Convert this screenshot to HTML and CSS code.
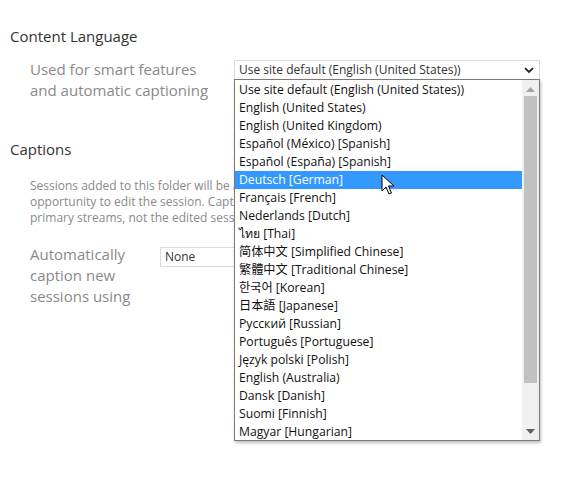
FILE: index.html
```html
<!DOCTYPE html>
<html>
<head>
<meta charset="utf-8">
<link rel="stylesheet" href="styles.css">
</head>
<body>
<div class="page">
  <section class="group">
    <h2 class="heading">Content Language</h2>
    <div class="field lang-field">
      <div class="label">Used for smart features<br>and automatic captioning</div>
      <div class="select-wrap">
        <div class="select lang-select">
          <span>Use site default (English (United States))</span>
          <svg class="chev" width="10" height="7" viewBox="0 0 10 7"><path d="M1 1.2 L5 5 L9 1.2" fill="none" stroke="#222" stroke-width="1.8"/></svg>
        </div>
        <div class="dropdown">
          <ul class="options">
            <li>Use site default (English (United States))</li>
            <li>English (United States)</li>
            <li>English (United Kingdom)</li>
            <li>Español (México) [Spanish]</li>
            <li>Español (España) [Spanish]</li>
            <li class="active">Deutsch [German]</li>
            <li>Français [French]</li>
            <li>Nederlands [Dutch]</li>
            <li>ไทย [Thai]</li>
            <li>简体中文 [Simplified Chinese]</li>
            <li>繁體中文 [Traditional Chinese]</li>
            <li>한국어 [Korean]</li>
            <li>日本語 [Japanese]</li>
            <li>Русский [Russian]</li>
            <li>Português [Portuguese]</li>
            <li>Język polski [Polish]</li>
            <li>English (Australia)</li>
            <li>Dansk [Danish]</li>
            <li>Suomi [Finnish]</li>
            <li>Magyar [Hungarian]</li>
          </ul>
          <div class="scrollbar">
            <svg class="arrow" width="9" height="5" viewBox="0 0 9 5"><path d="M0 5 L4.5 0 L9 5 Z" fill="#a3a3a3"/></svg>
            <div class="track"><div class="thumb"></div></div>
            <svg class="arrow" width="9" height="5" viewBox="0 0 9 5"><path d="M0 0 L4.5 5 L9 0 Z" fill="#606060"/></svg>
          </div>
          <svg class="cursor" width="14" height="22" viewBox="0 0 14 22"><path d="M1 1 L1 17 L5 13 L8 20 L10.5 19 L7.5 12 L13 12 Z" fill="#fff" stroke="#000" stroke-width="1" stroke-linejoin="miter"/></svg>
        </div>
      </div>
    </div>
  </section>
  <section class="group">
    <h2 class="heading">Captions</h2>
    <p class="desc"><span class="line">Sessions added to this folder will be automatically captioned after you have had an</span><span class="line">opportunity to edit the session. Captions are generated from the original</span><span class="line">primary streams, not the edited session.</span></p>
    <div class="field cap-field">
      <div class="label">Automatically<br>caption new<br>sessions using</div>
      <div class="select cap-select"><span>None</span></div>
    </div>
  </section>
</div>
</body>
</html>
```
FILE: styles.css
```css
* { box-sizing: border-box; }
html, body { margin: 0; padding: 0; background: #fff; }
body {
  font-family: "Open Sans", "Noto Sans", "Noto Sans CJK SC", sans-serif;
  color: #333;
  width: 578px;
  height: 480px;
  overflow: hidden;
}
.page { padding: 26px 0 0 10px; }
.heading {
  margin: 0;
  font-size: 15px;
  font-weight: 400;
  line-height: 20px;
  color: #333;
}
.group + .group { margin-top: 38px; }
.field { display: flex; align-items: flex-start; padding-left: 20px; }
.lang-field { margin-top: 14px; }
.label {
  font-size: 15px;
  line-height: 21px;
  color: #8a8a8a;
}
.lang-field .label { width: 204px; margin-top: -1px; }
.select-wrap { position: relative; }
.select {
  height: 20px;
  border: 1px solid #dadada;
  background: #fff;
  font-size: 12px;
  line-height: 18px;
  color: #333;
  padding: 0 0 0 4px;
  display: flex;
  align-items: center;
}
.lang-select { width: 306px; justify-content: space-between; padding-right: 5px; }
.chev { display: block; }
.dropdown {
  position: absolute;
  left: 0;
  top: 19px;
  width: 306px;
  height: 362px;
  border: 1px solid #7a7a7a;
  background: #fff;
  box-shadow: 1px 2px 3px rgba(0,0,0,0.25);
  display: flex;
}
.options {
  list-style: none;
  margin: 0;
  padding: 1px 0 0;
  flex: 1;
  font-size: 12.2px;
  color: #111;
}
.options li {
  height: 18px;
  line-height: 18px;
  padding-left: 4px;
  white-space: nowrap;
}
.options li.active { background: #3399ff; color: #fff; }
.scrollbar {
  width: 17px;
  background: #f0f0f0;
  display: flex;
  flex-direction: column;
  align-items: center;
  padding: 7px 0 6px;
}
.arrow { display: block; flex: none; }
.track { flex: 1; width: 100%; padding: 4px 2px 46px; }
.thumb { width: 13px; height: 100%; background: #c1c1c1; margin: 0 auto; }
.cursor { position: absolute; left: 146px; top: 94px; }
.desc {
  margin: 19px 0 0 20px;
  width: 204px;
  overflow: hidden;
  font-size: 12px;
  line-height: 16px;
  color: #8a8a8a;
}
.desc .line { display: block; white-space: nowrap; }
.cap-field { margin-top: 18px; }
.cap-field .label { width: 130px; }
.cap-select { width: 300px; margin-top: 3px; font-size: 12px; }
```
